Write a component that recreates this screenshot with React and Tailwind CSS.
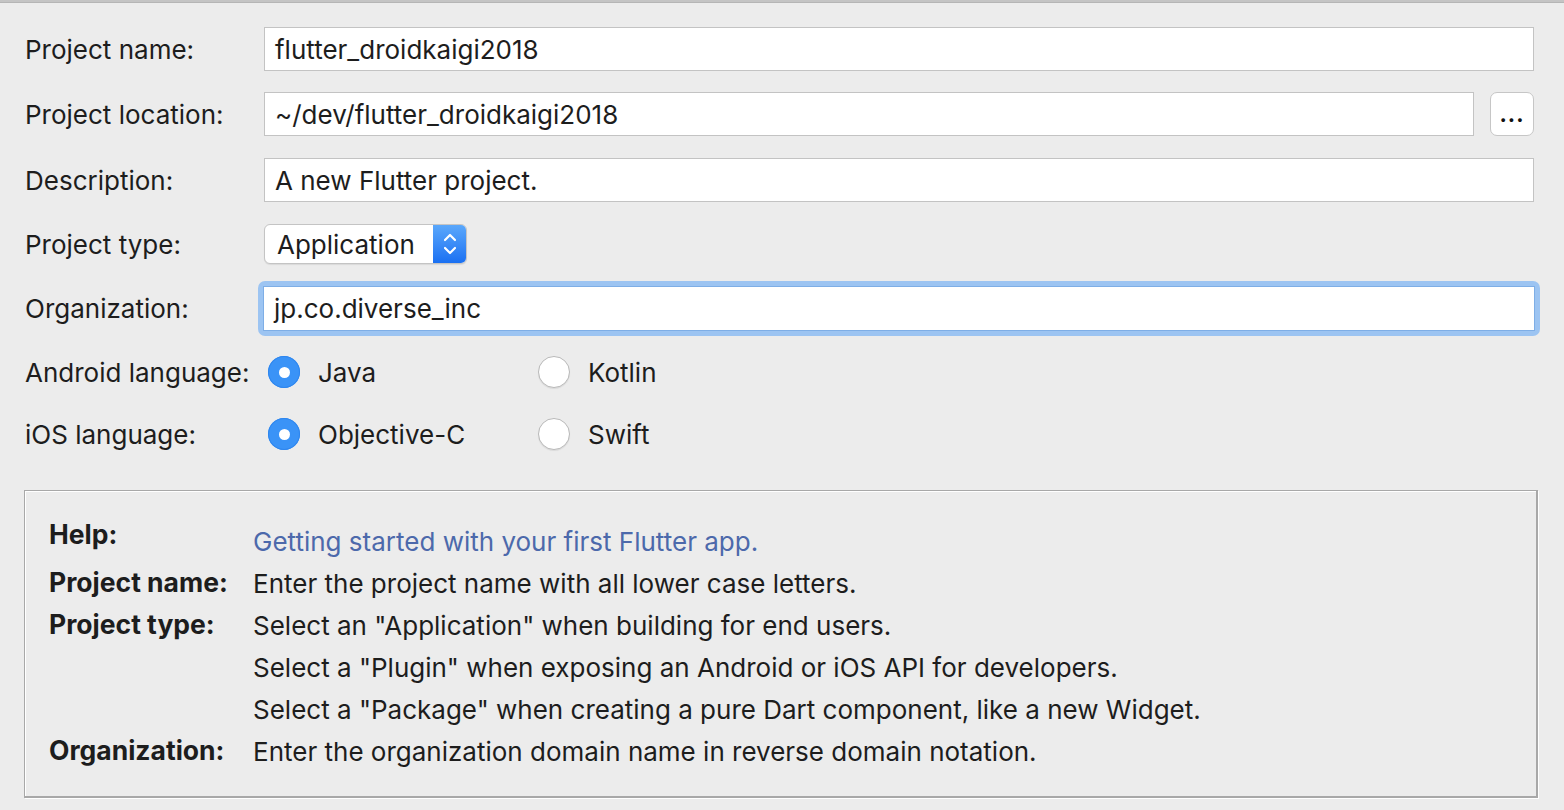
import React from "react";

const font = { fontFamily: "Inter, 'Noto Sans', sans-serif" };

function TextInput({ value }) {
  return (
    <div className="flex-1 h-[44px] bg-white border border-[#c3c3c3] flex items-center pl-[10px] text-[26px] text-[#1d1d1d]">
      {value}
    </div>
  );
}

function Radio({ checked, label }) {
  return (
    <div className="flex items-center w-[270px]">
      {checked ? (
        <div className="w-[32px] h-[32px] rounded-full bg-[#3a93f7] flex items-center justify-center shadow-[inset_0_0_0_1px_#2f86ee]">
          <div className="w-[11px] h-[11px] rounded-full bg-white" />
        </div>
      ) : (
        <div className="w-[32px] h-[32px] rounded-full bg-white border border-[#b9b9b9] shadow-[0_1px_1px_rgba(0,0,0,0.08)]" />
      )}
      <span className="ml-[18px] pt-[1px] text-[26px] text-[#1d1d1d]">{label}</span>
    </div>
  );
}

function Label({ children }) {
  return <div className="w-[239px] shrink-0 text-[26px] text-[#1d1d1d]">{children}</div>;
}

export default function App() {
  return (
    <div style={font} className="w-[1564px] h-[810px] bg-[#ececec] overflow-hidden flex flex-col">
      <div className="h-[3px] bg-[#c4c4c4] border-b border-[#b5b5b5]" />
      <div className="flex flex-col pl-[25px] pr-[30px]">
        <div className="flex items-center h-[44px] mt-[24px]">
          <Label>Project name:</Label>
          <TextInput value="flutter_droidkaigi2018" />
        </div>
        <div className="flex items-center h-[44px] mt-[21px]">
          <Label>Project location:</Label>
          <TextInput value="~/dev/flutter_droidkaigi2018" />
          <div className="ml-[16px] w-[44px] h-[44px] rounded-[7px] bg-white border border-[#c6c6c6] flex items-end justify-center pb-[10px] text-[22px] leading-none text-[#111] font-bold tracking-[1px]">
            ...
          </div>
        </div>
        <div className="flex items-center h-[44px] mt-[22px]">
          <Label>Description:</Label>
          <TextInput value="A new Flutter project." />
        </div>
        <div className="flex items-center h-[44px] mt-[20px]">
          <Label>Project type:</Label>
          <div className="flex h-[40px] w-[203px] rounded-[6px] border border-[#c4c4c4] bg-white overflow-hidden shadow-[0_1px_1px_rgba(0,0,0,0.08)]">
            <div className="flex-1 flex items-center pl-[12px] pt-[1px] text-[26px] text-[#1d1d1d]">Application</div>
            <div className="w-[33px] bg-gradient-to-b from-[#5aa7fb] to-[#1a70f2] flex items-center justify-center">
              <svg width="14" height="26" viewBox="0 0 14 26" fill="none" stroke="white" strokeWidth="2.2" strokeLinecap="round" strokeLinejoin="round">
                <path d="M2 9 L7 4 L12 9" />
                <path d="M2 17 L7 22 L12 17" />
              </svg>
            </div>
          </div>
        </div>
        <div className="flex items-center h-[44px] mt-[20px]">
          <Label>Organization:</Label>
          <div className="flex-1 -mx-[6px] p-[5px] rounded-[7px] bg-[#9cc4f2]">
            <div className="h-[45px] bg-white border border-[#7eaee6] flex items-center pl-[10px] text-[26px] text-[#1d1d1d]">
              jp.co.diverse_inc
            </div>
          </div>
        </div>
        <div className="flex items-center h-[44px] mt-[20px]">
          <Label>Android language:</Label>
          <div className="ml-[4px] flex">
            <Radio checked label="Java" />
            <Radio label="Kotlin" />
          </div>
        </div>
        <div className="flex items-center h-[44px] mt-[18px]">
          <Label>iOS language:</Label>
          <div className="ml-[4px] flex">
            <Radio checked label="Objective-C" />
            <Radio label="Swift" />
          </div>
        </div>
      </div>
      <div className="mt-[34px] ml-[24px] w-[1514px] h-[308px] border-t border-l border-[#a8a8a8] shadow-[inset_1px_1px_0_#ffffff,1px_1px_0_#ffffff] ">
        <div className="w-full h-full border-r-2 border-b-2 border-[#a8a8a8] pl-[24px] pt-[29px]">
          <div className="grid grid-cols-[204px_1fr] text-[26px] text-[#1d1d1d] auto-rows-[42px] items-center">
            <div className="font-bold text-[26.5px] -mt-[12px]">Help:</div>
            <div className="text-[#4c69ab]">Getting started with your first Flutter app.</div>
            <div className="font-bold text-[26.5px]">Project name:</div>
            <div>Enter the project name with all lower case letters.</div>
            <div className="font-bold text-[26.5px]">Project type:</div>
            <div>Select an "Application" when building for end users.</div>
            <div />
            <div>Select a "Plugin" when exposing an Android or iOS API for developers.</div>
            <div />
            <div>Select a "Package" when creating a pure Dart component, like a new Widget.</div>
            <div className="font-bold text-[26.5px]">Organization:</div>
            <div>Enter the organization domain name in reverse domain notation.</div>
          </div>
        </div>
      </div>
    </div>
  );
}
